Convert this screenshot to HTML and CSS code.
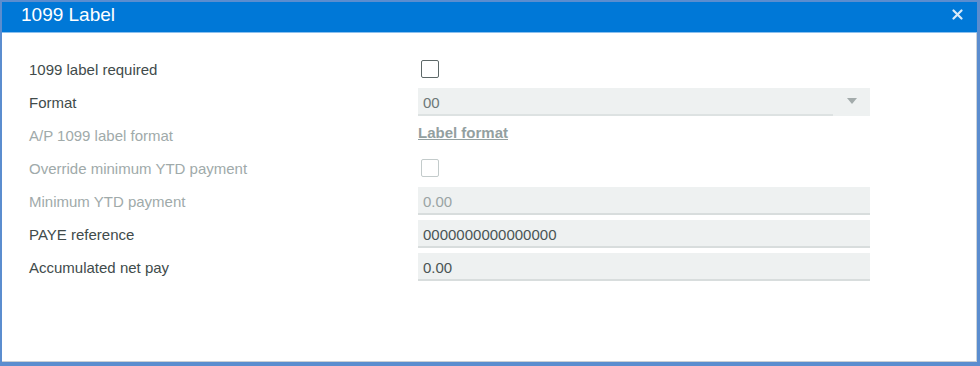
FILE: index.html
```html
<!DOCTYPE html>
<html lang="en">
<head>
    <meta charset="UTF-8">
    <meta name="viewport" content="width=device-width, initial-scale=1.0">
    <title>1099 Label</title>
    <link rel="stylesheet" href="styles.css">
</head>
<body>

    <div class="dialog">
        <!-- Title bar -->
        <div class="titlebar">
            <span class="title">1099 Label</span>
            <button class="close" aria-label="Close">
                <svg width="11" height="11" viewBox="0 0 11 11">
                    <path d="M1.5 1.5 L9.5 9.5 M9.5 1.5 L1.5 9.5" stroke="#fff" stroke-width="2.2" stroke-linecap="round"/>
                </svg>
            </button>
        </div>

        <!-- Form -->
        <div class="content">
            <div class="form">
                <div class="label">1099 label required</div>
                <div class="field"><span class="checkbox"></span></div>

                <div class="label">Format</div>
                <div class="field">
                    <div class="select">
                        <span class="select-value">00</span>
                        <span class="select-arrow"></span>
                    </div>
                </div>

                <div class="label disabled">A/P 1099 label format</div>
                <div class="field"><a class="link" href="#">Label format</a></div>

                <div class="label disabled">Override minimum YTD payment</div>
                <div class="field"><span class="checkbox off"></span></div>

                <div class="label disabled">Minimum YTD payment</div>
                <div class="field"><div class="input off">0.00</div></div>

                <div class="label">PAYE reference</div>
                <div class="field"><div class="input">0000000000000000</div></div>

                <div class="label">Accumulated net pay</div>
                <div class="field"><div class="input">0.00</div></div>
            </div>
        </div>
    </div>

</body>
</html>
```

FILE: styles.css
```css
body {
    margin: 0;
    font-family: "Liberation Sans", Arial, sans-serif;
    background-color: #ffffff;
}

.dialog {
    width: 980px;
    height: 366px;
    box-sizing: border-box;
    border: 2px solid #5b8dcf;
    border-right-width: 3px;
    border-bottom-width: 4px;
    display: flex;
    flex-direction: column;
    background-color: white;
}

.titlebar {
    height: 30px;
    background-color: #0078d7;
    border-bottom: 1px solid #8cc0ee;
    display: flex;
    align-items: center;
    justify-content: space-between;
    padding: 0 14px 0 19px;
}

.title {
    color: white;
    font-size: 19px;
    margin-top: -4px;
}

.close {
    border: none;
    background: none;
    padding: 0;
    width: 11px;
    height: 11px;
    margin-top: -5px;
    cursor: pointer;
}

.close svg {
    display: block;
    opacity: 0.85;
}

.content {
    flex: 1;
    border-right: 1px solid #cdd3d8;
    border-bottom: 1px solid #c9cfd4;
    padding: 22px 0 0 27px;
}

.form {
    display: grid;
    grid-template-columns: 389px 452px;
    grid-auto-rows: 28px;
    row-gap: 5px;
}

.label {
    display: flex;
    align-items: center;
    font-size: 15px;
    color: #414b4b;
}

.label.disabled {
    color: #a0aaaa;
}

.field {
    display: flex;
    align-items: center;
}

.checkbox {
    width: 16px;
    height: 16px;
    margin-left: 3px;
    border: 1.5px solid #5d6868;
    border-radius: 2px;
}

.checkbox.off {
    border-color: #c3cbcb;
}

.select {
    width: 100%;
    height: 100%;
    display: flex;
    background-color: #eef1f1;
}

.select-value {
    flex: 1;
    display: flex;
    align-items: center;
    padding: 2px 0 0 5px;
    font-size: 15px;
    color: #6d7878;
    border-bottom: 2px solid #dde2e2;
}

.select-arrow {
    width: 37px;
    position: relative;
}

.select-arrow::after {
    content: "";
    position: absolute;
    left: 14px;
    top: 10px;
    border-left: 5px solid transparent;
    border-right: 5px solid transparent;
    border-top: 6px solid #a3abab;
}

.link {
    font-size: 15px;
    font-weight: bold;
    color: #93a0a0;
    text-decoration: underline;
    margin-top: -6px;
}

.input {
    width: 100%;
    height: 100%;
    box-sizing: border-box;
    display: flex;
    align-items: center;
    padding: 2px 0 0 5px;
    font-size: 15px;
    color: #4a5555;
    background-color: #eef1f1;
    border-bottom: 2px solid #d8dddd;
}

.input.off {
    color: #9aa4a4;
}
```
